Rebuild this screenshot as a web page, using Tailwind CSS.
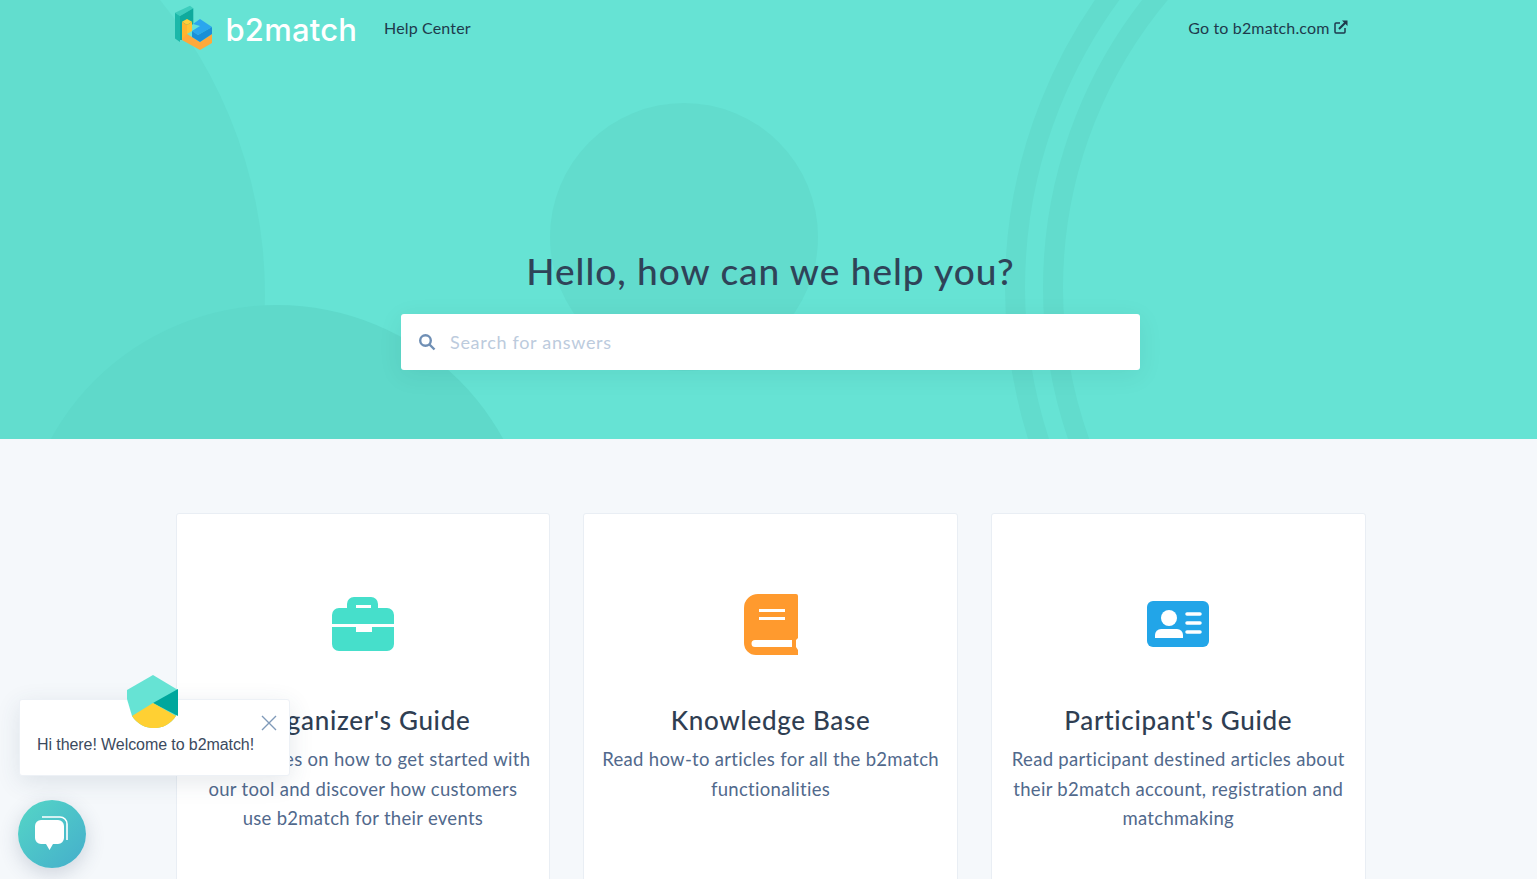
<!DOCTYPE html>
<html lang="en">
<head>
    <meta charset="UTF-8">
    <title>b2match Help Center</title>
    <script src="https://cdn.jsdelivr.net/npm/@tailwindcss/browser@4"></script>
</head>
<body class="relative h-[879px] overflow-hidden bg-[#f5f8fb] font-['Lato','Open_Sans',sans-serif] text-[#2f3e52]">

<!-- hero -->
<header class="relative h-[439px] overflow-hidden bg-[#66e3d4]">
    <div class="absolute left-[-669px] top-[-172px] h-[934px] w-[934px] rounded-full bg-[#62ddce]"></div>
    <div class="absolute left-[19px] top-[305px] h-[516px] w-[516px] rounded-full bg-[#5fd9ca]"></div>
    <div class="absolute left-[550px] top-[103px] h-[268px] w-[268px] rounded-full bg-[#62dccd]"></div>
    <div class="absolute left-[1005px] top-[-218px] h-[1012px] w-[1012px] rounded-full border-[20px] border-[#62dccd]"></div>
    <div class="absolute left-[1043px] top-[-180px] h-[936px] w-[936px] rounded-full border-[20px] border-[#62dccd]"></div>

    <nav class="relative mx-auto flex h-[56px] w-[1190px] items-center justify-between pr-[16px]">
        <div class="flex items-center">
            <svg width="40" height="54" viewBox="0 0 40 54" class="mt-[-2px] ml-[1px]">
                <path d="M0 12.7 L15 5.7 L18.3 8.3 L5 16Z" fill="#3dcdbd"/>
                <path d="M0 12.7 L5 16 V42 L0 38.5Z" fill="#1cb8a9"/>
                <path d="M5 16 L18.3 8.3 V24 L12 28 V40 H5Z" fill="#0faa9d"/>
                <path d="M7 21.7 L12 19 L17 21.7 L12 25Z" fill="#ffcf3a"/>
                <path d="M7 21.7 L12 25 V35 L7 40Z" fill="#ffb52e"/>
                <path d="M12 25 L17 21.7 V31 L12 34Z" fill="#ffc233"/>
                <path d="M7 39 L12 34 L25 42 L37 34 V43 L25 50 L7 40Z" fill="#ffa93a"/>
                <path d="M18 24 L25 19 L37 27 L23 35 L17 31 L25 26Z" fill="#2aa6ee"/>
                <path d="M17 31 V37 L25 42 L37 34 V27 L23 35Z" fill="#1a8fd8"/>
            </svg>
            <span class="mt-[2px] ml-[11px] font-['Inter',sans-serif] text-[31px] leading-none font-medium tracking-[0.2px] text-white">b2match</span>
            <a class="ml-[27px] text-[16px] tracking-[0.15px] text-[#1e3a4c]">Help Center</a>
        </div>
        <a class="flex items-center gap-[4px] text-[16px] tracking-[0.15px] text-[#1e3a4c]">Go to b2match.com
            <svg width="14" height="14" viewBox="0 0 14 14" class="mb-[3px]" fill="none" stroke="#1e3a4c">
                <path d="M6 3 H2 a1 1 0 0 0 -1 1 V12 a1 1 0 0 0 1 1 H10 a1 1 0 0 0 1 -1 V8" stroke-width="1.5"/>
                <path d="M5 9 L12 2" stroke-width="2.2"/>
                <path d="M8 0.5 H13.5 V6Z" fill="#1e3a4c" stroke="none"/>
            </svg>
        </a>
    </nav>

    <div class="relative mt-[193px] flex flex-col items-center pl-[4px]">
        <h1 class="text-[37px] leading-[44px] font-medium tracking-[1px] text-[#2f4358]">Hello, how can we help you?</h1>
        <div class="mt-[21px] flex h-[56px] w-[739px] items-center rounded-[3px] bg-white pl-[17px] shadow-[0_5px_24px_rgba(0,60,60,0.08)]">
            <svg width="18" height="18" viewBox="0 0 18 18" fill="none" stroke="#6f8fb5">
                <circle cx="7.5" cy="7.5" r="5.3" stroke-width="2.4"/>
                <path d="M11.5 11.5 L16.5 16.5" stroke-width="2.4"/>
            </svg>
            <span class="ml-[14px] text-[18px] tracking-[0.7px] text-[#bccbdd]">Search for answers</span>
        </div>
    </div>
</header>

<!-- cards -->
<main class="mt-[74px] ml-[175.6px] grid w-[1190px] grid-cols-3 gap-[33px]">
    <section class="flex h-[500px] flex-col items-center rounded-[3px] border border-[#e9eef4] bg-white px-[14px] pt-[70px] text-center">
        <div class="flex h-[80px] items-center">
            <svg width="62" height="54" viewBox="0 0 62 54" fill="#46dfcb">
                <path fill-rule="evenodd" d="M15 11 V7 a7 7 0 0 1 7-7 H39 a7 7 0 0 1 7 7 V11 H55 a7 7 0 0 1 7 7 V27 H0 V18 a7 7 0 0 1 7-7Z M24 11 H39 V8 H24Z"/>
                <path d="M0 30 H24 V35 H40 V30 H62 V47 a7 7 0 0 1-7 7 H7 a7 7 0 0 1-7-7Z"/>
            </svg>
        </div>
        <h2 class="mt-[38px] text-[26px] leading-[36px] font-medium tracking-[0.7px] text-[#2f3e52]">Organizer's Guide</h2>
        <p class="mt-[7px] w-[340px] text-[18.5px] leading-[29.5px] tracking-[0.3px] text-[#51698c]">Read articles on how to get started with our tool and discover how customers use b2match for their events</p>
    </section>
    <section class="flex h-[500px] flex-col items-center rounded-[3px] border border-[#e9eef4] bg-white px-[14px] pt-[70px] text-center">
        <div class="flex h-[80px] items-center">
            <svg width="54" height="61" viewBox="0 0 54 61" fill="#ff9a2e">
                <path fill-rule="evenodd" d="M14 0 H52 a2 2 0 0 1 2 2 V44 L52 46 V53 L54 56 V61 H12 A12 12 0 0 1 0 49 V14 A14 14 0 0 1 14 0Z M15 15 H41 V18 H15Z M15 23 H41 V26 H15Z M11 46 a3.5 3.5 0 0 0 0 7 H48 V46Z"/>
            </svg>
        </div>
        <h2 class="mt-[38px] text-[26px] leading-[36px] font-medium tracking-[0.7px] text-[#2f3e52]">Knowledge Base</h2>
        <p class="mt-[7px] w-[340px] text-[18.5px] leading-[29.5px] tracking-[0.3px] text-[#51698c]">Read how-to articles for all the b2match functionalities</p>
    </section>
    <section class="flex h-[500px] flex-col items-center rounded-[3px] border border-[#e9eef4] bg-white px-[14px] pt-[70px] text-center">
        <div class="flex h-[80px] items-center">
            <svg width="62" height="46" viewBox="0 0 62 46">
                <rect width="62" height="46" rx="6" fill="#22a5e8"/>
                <circle cx="22" cy="17" r="8" fill="#fff"/>
                <path d="M8 37 v-3 a6 6 0 0 1 6-6 h16 a6 6 0 0 1 6 6 v3Z" fill="#fff"/>
                <path d="M40 13 H53 M40 22 H53 M40 31 H53" stroke="#fff" stroke-width="3.5" stroke-linecap="round"/>
            </svg>
        </div>
        <h2 class="mt-[38px] text-[26px] leading-[36px] font-medium tracking-[0.7px] text-[#2f3e52]">Participant's Guide</h2>
        <p class="mt-[7px] w-[340px] text-[18.5px] leading-[29.5px] tracking-[0.3px] text-[#51698c]">Read participant destined articles about their b2match account, registration and matchmaking</p>
    </section>
</main>

<!-- chat widget -->
<div class="absolute left-[19px] top-[699px] h-[77px] w-[271px] rounded-[3px] border border-[#edf1f6] bg-white pt-[33px] pl-[17px] shadow-[0_6px_24px_rgba(50,70,100,0.12)]">
    <p class="font-['Liberation_Sans',sans-serif] text-[16px] leading-[24px] tracking-[-0.08px] text-[#3b4a5e]">Hi there! Welcome to b2match!</p>
    <svg width="18" height="18" viewBox="0 0 18 18" stroke="#7f9ab9" stroke-width="1.4" class="absolute top-[14px] right-[11px]"><path d="M2 2 L16 16 M16 2 L2 16"/></svg>
</div>
<svg width="52" height="53" viewBox="0 0 52 53" class="absolute left-[127px] top-[675px]">
    <path d="M26 0 L51 15 V37 A26 26 0 0 1 5 41 L0 24 V15Z" fill="#66e3d4"/>
    <path d="M26 28 L51 14 V41 Z" fill="#00a79d"/>
    <path d="M26 28 L49 41 A26 26 0 0 1 5 41Z" fill="#ffd033"/>
</svg>
<div class="absolute left-[18px] top-[800px] flex h-[68px] w-[68px] items-center justify-center rounded-full bg-gradient-to-br from-[#55d6c6] to-[#45aecb] shadow-[0_6px_20px_rgba(50,70,100,0.2)]">
    <svg width="36" height="36" viewBox="0 0 36 36">
        <path d="M8 1 H26 a7 7 0 0 1 7 7 V24 " fill="none" stroke="#fff" stroke-width="1.6"/>
        <path d="M7 4 H24 a6 6 0 0 1 6 6 V22 a6 6 0 0 1-6 6 H19 L15.5 34 L12 28 H7 a6 6 0 0 1-6-6 V10 a6 6 0 0 1 6-6Z" fill="#fff"/>
    </svg>
</div>

</body>
</html>
